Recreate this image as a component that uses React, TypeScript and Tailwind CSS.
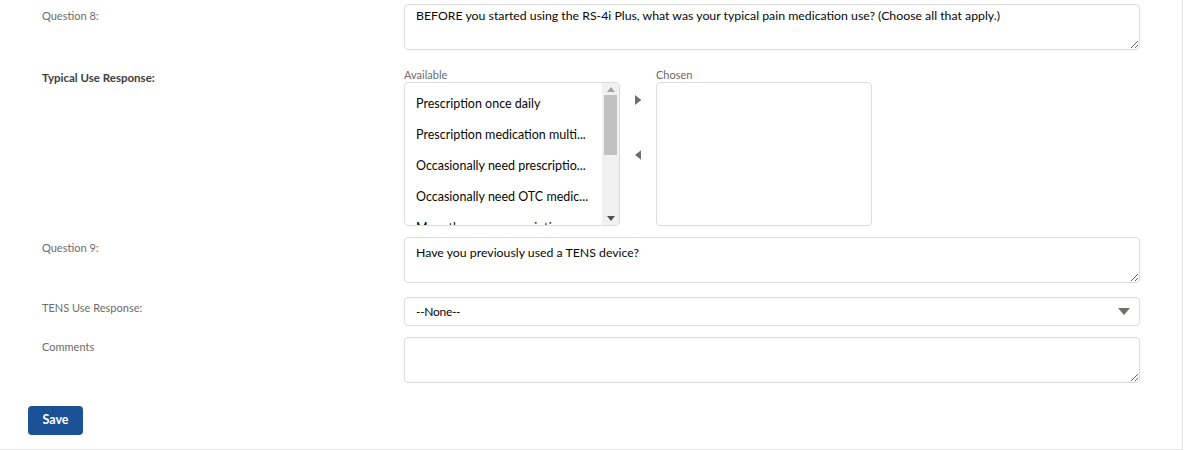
const font = { fontFamily: '"Lato", "Open Sans", sans-serif' };

const available = [
  "Prescription once daily",
  "Prescription medication multi...",
  "Occasionally need prescriptio...",
  "Occasionally need OTC medic...",
  "More than one prescription...",
];

function Label({ text, bold, className = "" }: { text: string; bold?: boolean; className?: string }) {
  return (
    <div className={`w-[362px] shrink-0 ${bold ? "text-[11.5px] font-bold text-[#3e3e3c]" : "text-[11px] text-[#6b6b6b]"} ${className}`}>
      {text}
    </div>
  );
}

function Area({ value, pt = "pt-[7px]" }: { value: string; pt?: string }) {
  return (
    <textarea
      readOnly
      defaultValue={value}
      className={`block h-[46px] w-[736px] resize-y rounded-[4px] border border-[#dddbda] bg-white px-[11px] ${pt} text-[12.3px] leading-[18px] text-[#080707] outline-none`}
    />
  );
}

function Tri({ dir, size = 1 }: { dir: "up" | "down" | "left" | "right"; size?: number }) {
  const pts = {
    up: "0,5 4,0 8,5",
    down: "0,0 8,0 4,5",
    left: "5,0 5,8 0,4",
    right: "0,0 0,8 5,4",
  }[dir];
  const vertical = dir === "up" || dir === "down";
  return (
    <svg width={(vertical ? 8 : 5) * size} height={(vertical ? 5 : 8) * size} viewBox={vertical ? "0 0 8 5" : "0 0 5 8"}>
      <polygon points={pts} fill="currentColor" />
    </svg>
  );
}

export default function App() {
  return (
    <div style={font} className="h-[450px] w-[1183px] border-r border-b border-[#e3e3e3] bg-white">
      <div className="flex pt-[4px] pl-[42px]">
        <Label text="Question 8:" className="pt-[4px]" />
        <Area value="BEFORE you started using the RS-4i Plus, what was your typical pain medication use? (Choose all that apply.)" pt="pt-[2px]" />
      </div>

      <div className="mt-[18px] flex pl-[42px]">
        <Label text="Typical Use Response:" bold className="pt-[1px]" />
        <div className="flex">
          <div>
            <div className="h-[14px] text-[11px] leading-[14px] text-[#6b6b6b]">Available</div>
            <div className="flex h-[144px] w-[216px] overflow-hidden rounded-[4px] border border-[#dddbda] bg-white">
              <ul className="flex-1 overflow-hidden pt-[10px] pl-[11px]">
                {available.map((item) => (
                  <li key={item} className="h-[31px] whitespace-nowrap text-[12.5px] leading-[22px] text-[#080707]">
                    {item}
                  </li>
                ))}
              </ul>
              <div className="flex w-[17px] shrink-0 flex-col items-center bg-[#f1f1f1] py-[4px] text-[#a3a3a3]">
                <Tri dir="up" />
                <div className="mt-[3px] h-[60px] w-[13px] bg-[#c1c1c1]" />
                <div className="flex-1" />
                <div className="text-[#505050]">
                  <Tri dir="down" />
                </div>
              </div>
            </div>
          </div>
          <div className="flex w-[36px] flex-col items-center pt-[27px] text-[#706e6b]">
            <Tri dir="right" size={1.25} />
            <div className="mt-[45px]">
              <Tri dir="left" size={1.25} />
            </div>
          </div>
          <div>
            <div className="h-[14px] text-[11px] leading-[14px] text-[#6b6b6b]">Chosen</div>
            <div className="h-[144px] w-[216px] rounded-[4px] border border-[#dddbda] bg-white" />
          </div>
        </div>
      </div>

      <div className="mt-[11px] flex pl-[42px]">
        <Label text="Question 9:" className="pt-[3px]" />
        <Area value="Have you previously used a TENS device?" pt="pt-[6px]" />
      </div>

      <div className="mt-[14px] flex pl-[42px]">
        <Label text="TENS Use Response:" className="pt-[3px]" />
        <div className="flex h-[29px] w-[736px] items-center justify-between rounded-[4px] border border-[#dddbda] bg-white pr-[9px] pl-[11px]">
          <span className="text-[12px] tracking-[-0.3px] text-[#080707]">--None--</span>
          <svg width="12" height="7" viewBox="0 0 12 7">
            <polygon points="0,0 12,0 6,7" fill="#706e6b" />
          </svg>
        </div>
      </div>

      <div className="mt-[11px] flex pl-[42px]">
        <Label text="Comments" className="pt-[2px]" />
        <Area value="" />
      </div>

      <div className="mt-[23px] pl-[28px]">
        <button className="h-[29px] w-[55px] rounded-[4px] bg-[#1a5295] text-[12.5px] font-bold text-white">Save</button>
      </div>
    </div>
  );
}
